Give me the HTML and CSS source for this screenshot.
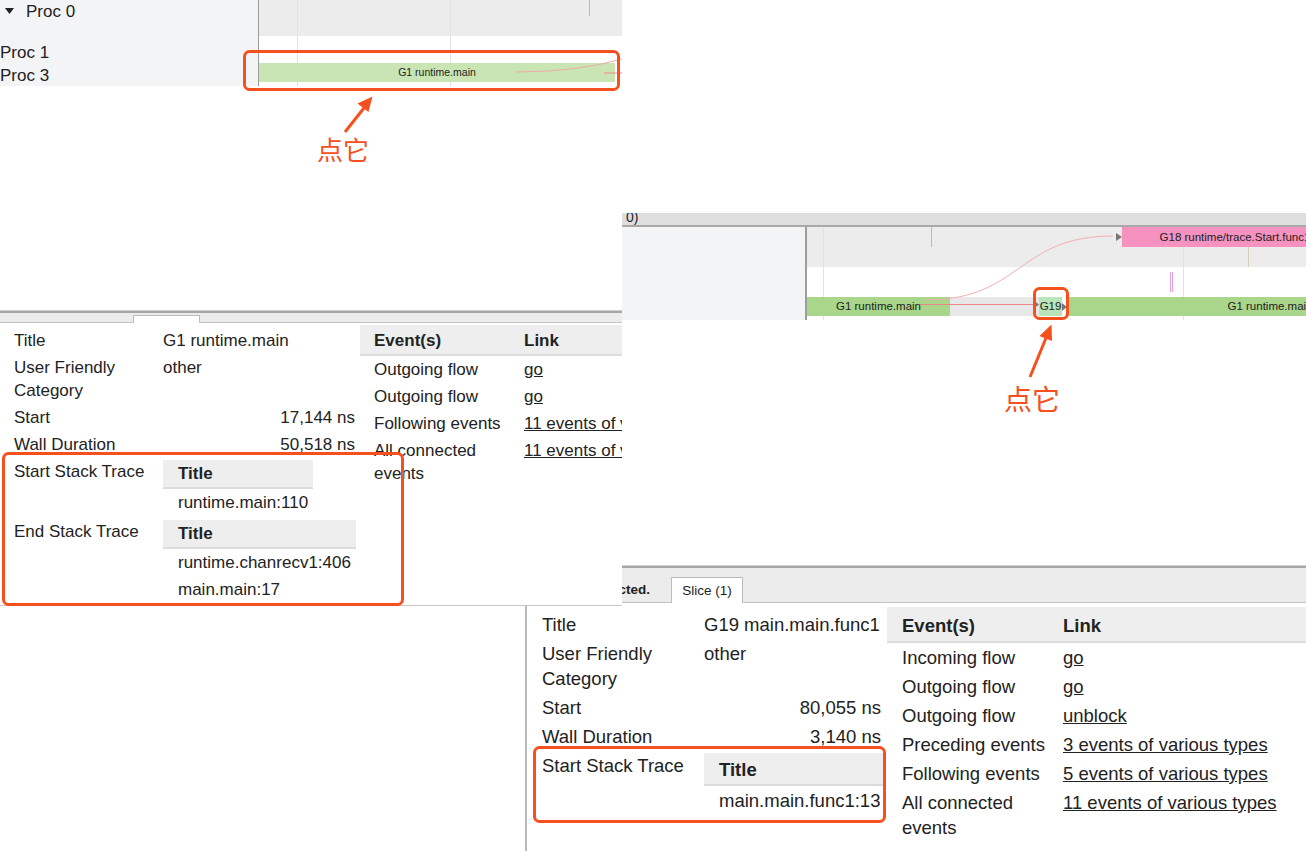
FILE: index.html
```html
<!DOCTYPE html>
<html>
<head>
    <meta charset="utf-8">
    <link rel="stylesheet" href="styles.css">
</head>
<body>
<div class="canvas">

    <!-- second capture: the G19 slice is selected -->
    <div class="shot shot-b">
        <div class="trace">
            <div class="trace-header"><span class="proc-name">0)</span></div>
            <div class="lanes">
                <div class="lane lane-top">
                    <div class="lane-label"></div>
                    <div class="lane-track shaded">
                        <span class="grid" style="left:16px"></span>
                        <span class="grid" style="left:376px"></span>
                        <span class="tick pink" style="left:124px;top:0;height:20px"></span>
                        <span class="arrow-head" style="left:309px;top:6px"></span>
                        <div class="slice slice-pink" style="left:315px;top:0;width:226px;height:20px;line-height:20px">G18 runtime/trace.Start.func1</div>
                        <span class="tick tan" style="left:441px;top:20px;height:20px"></span>
                    </div>
                </div>
                <div class="lane lane-bottom">
                    <div class="lane-label"></div>
                    <div class="lane-track">
                        <span class="grid" style="left:16px"></span>
                        <span class="grid" style="left:376px"></span>
                        <span class="tick pink" style="left:363px;top:5px;height:20px"></span>
                        <span class="tick pink" style="left:365px;top:5px;height:20px"></span>
                        <div class="slice slice-green" style="left:0;top:30px;width:143px">G1 runtime.main</div>
                        <div class="slice slice-idle" style="left:143px;top:30px;width:89px"></div>
                        <div class="slice slice-sel" style="left:232px;top:30px;width:23px">G19</div>
                        <span class="arrow-head small" style="left:255px;top:36px"></span>
                        <div class="slice slice-green" style="left:261px;top:30px;width:404px">G1 runtime.main</div>
                    </div>
                </div>
                <svg class="flows" width="499" height="93">
                    <path d="M118,73 C215,73 210,9 306,9" fill="none" stroke="#f2b0b0" stroke-width="1"/>
                    <path d="M113,77.5 H229" fill="none" stroke="#ec8686" stroke-width="1"/>
                    <polygon points="228,74.5 232,77.5 228,80.5" fill="#777"/>
                </svg>
            </div>
        </div>

        <div class="tabs">
            <div class="tabs-bar">
                <span class="tab-status">1 item selected.</span>
                <span class="tab">Slice (1)</span>
            </div>
        </div>

        <div class="details">
            <div class="info">
                <div class="k">Title</div><div class="v">G19 main.main.func1</div>
                <div class="k">User Friendly Category</div><div class="v">other</div>
                <div class="k">Start</div><div class="v num">80,055 ns</div>
                <div class="k">Wall Duration</div><div class="v num">3,140 ns</div>
                <div class="k">Start Stack Trace</div>
                <div class="v">
                    <table class="stack">
                        <tr><th>Title</th></tr>
                        <tr><td>main.main.func1:13</td></tr>
                    </table>
                </div>
            </div>
            <div class="events">
                <div class="h">Event(s)</div><div class="h">Link</div>
                <div class="e">Incoming flow</div><div class="l"><a href="#">go</a></div>
                <div class="e">Outgoing flow</div><div class="l"><a href="#">go</a></div>
                <div class="e">Outgoing flow</div><div class="l"><a href="#">unblock</a></div>
                <div class="e">Preceding events</div><div class="l"><a href="#">3 events of various types</a></div>
                <div class="e">Following events</div><div class="l"><a href="#">5 events of various types</a></div>
                <div class="e">All connected events</div><div class="l"><a href="#">11 events of various types</a></div>
            </div>
        </div>
    </div>

    <!-- first capture: G1 runtime.main on Proc 3 -->
    <div class="shot shot-a">
        <div class="trace">
            <div class="lanes">
                <div class="lane lane-proc0">
                    <div class="lane-label">
                        <svg class="caret" width="9" height="6" viewBox="0 0 9 6"><polygon points="0,0 9,0 4.5,6" fill="#222"/></svg>
                        <span>Proc 0</span>
                    </div>
                    <div class="lane-track shaded">
                        <span class="grid" style="left:38px"></span>
                        <span class="grid" style="left:191px"></span>
                        <span class="tick pink" style="left:330px;top:0;height:16px"></span>
                    </div>
                </div>
                <div class="lane lane-procs">
                    <div class="lane-label">
                        <div>Proc 1</div>
                        <div>Proc 3</div>
                    </div>
                    <div class="lane-track">
                        <span class="grid" style="left:38px"></span>
                        <span class="grid" style="left:191px"></span>
                        <div class="slice slice-light" style="left:0;top:27px;width:356px">G1 runtime.main</div>
                    </div>
                </div>
                <svg class="flows" width="363" height="86">
                    <path d="M257,72 Q318,72 363,59" fill="none" stroke="#f0aaaa" stroke-width="1"/>
                    <path d="M345,73 H363" fill="none" stroke="#ec8a8a" stroke-width="1"/>
                </svg>
            </div>
        </div>

        <div class="tabs">
            <div class="tabs-bar">
                <span class="tab"></span>
            </div>
        </div>

        <div class="details">
            <div class="info">
                <div class="k">Title</div><div class="v">G1 runtime.main</div>
                <div class="k">User Friendly Category</div><div class="v">other</div>
                <div class="k">Start</div><div class="v num">17,144 ns</div>
                <div class="k">Wall Duration</div><div class="v num">50,518 ns</div>
                <div class="k">Start Stack Trace</div>
                <div class="v">
                    <table class="stack">
                        <tr><th>Title</th></tr>
                        <tr><td>runtime.main:110</td></tr>
                    </table>
                </div>
                <div class="k">End Stack Trace</div>
                <div class="v">
                    <table class="stack">
                        <tr><th>Title</th></tr>
                        <tr><td>runtime.chanrecv1:406</td></tr>
                        <tr><td>main.main:17</td></tr>
                    </table>
                </div>
            </div>
            <div class="events">
                <div class="h">Event(s)</div><div class="h">Link</div>
                <div class="e">Outgoing flow</div><div class="l"><a href="#">go</a></div>
                <div class="e">Outgoing flow</div><div class="l"><a href="#">go</a></div>
                <div class="e">Following events</div><div class="l"><a href="#">11 events of various types</a></div>
                <div class="e">All connected events</div><div class="l"><a href="#">11 events of various types</a></div>
            </div>
        </div>
    </div>

    <!-- annotations drawn over both captures -->
    <svg class="marks" width="1306" height="851">
        <g fill="none" stroke="#f5501d" stroke-width="3">
            <rect x="244.5" y="51.5" width="374" height="38" rx="5"/>
            <rect x="3.5" y="453.5" width="399" height="151" rx="5"/>
            <rect x="1034.5" y="288.5" width="33" height="30" rx="5"/>
            <rect x="534.5" y="747.5" width="350" height="74" rx="5"/>
            <path d="M345,132 L364,108"/>
            <path d="M1030,377 L1046,338"/>
        </g>
        <g fill="#f5501d">
            <polygon points="372.5,96.5 368.5,112 357.5,103.5"/>
            <polygon points="1051.5,324.5 1052,341 1039.5,336"/>
        </g>
    </svg>
    <div class="note note-a">点它</div>
    <div class="note note-b">点它</div>

</div>
</body>
</html>
```

FILE: styles.css
```css
* {
    box-sizing: border-box;
}
body {
    margin: 0;
    background: #fff;
    font-family: "Liberation Sans", Arial, "Noto Sans CJK SC", sans-serif;
    color: #222;
}
.canvas {
    position: relative;
    width: 1306px;
    height: 851px;
    overflow: hidden;
    background: #fff;
}

/* each capture is a cropped window pasted on the canvas */
.shot {
    position: absolute;
    background: #fff;
    overflow: hidden;
    display: flex;
    flex-direction: column;
}
.shot-a {
    left: 0;
    top: 0;
    width: 622px;
    height: 606px;
    font-size: 17px;
    line-height: 23px;
    border-bottom: 1px solid #c8c8c8;
}
.shot-b {
    left: 525px;
    top: 213px;
    width: 781px;
    height: 638px;
    font-size: 18.5px;
    line-height: 25px;
}

/* timeline */
.trace-header {
    height: 14px;
    background: #dedede;
    border-bottom: 2px solid #a9a9a9;
    padding-left: 101px;
    font-size: 14px;
    line-height: 9px;
    overflow: hidden;
}
.lanes {
    position: relative;
}
.lane {
    display: flex;
}
.lane-label {
    flex: none;
    background: #f3f4f6;
}
.lane-track {
    position: relative;
    flex: 1;
    background: #fff;
}
.lane-track.shaded {
    background: #ececec;
}
.shot-a .lane-label {
    width: 259px;
    border-right: 1px solid #9c9c9c;
}
.shot-b .lane-label {
    width: 282px;
    border-right: 2px solid #9e9e9e;
}
.lane-top {
    height: 40px;
}
.lane-bottom {
    height: 53px;
}
.lane-proc0 {
    height: 36px;
}
.lane-proc0 .lane-label {
    display: flex;
    align-items: flex-start;
    padding-left: 5px;
}
.caret {
    margin: 8px 12px 0 0;
}
.lane-procs {
    height: 50px;
}
.lane-procs .lane-label {
    padding-top: 5px;
}
.flows {
    position: absolute;
    top: 0;
}
.shot-a .flows {
    left: 259px;
}
.shot-b .flows {
    left: 282px;
}

.grid {
    position: absolute;
    top: 0;
    bottom: 0;
    width: 1px;
    background: #e2e2e2;
}
.tick {
    position: absolute;
    width: 1px;
}
.tick.pink {
    background: #e49ce2;
}
.tick.tan {
    background: #d8cfb4;
}
.arrow-head {
    position: absolute;
    width: 0;
    height: 0;
    border-top: 4px solid transparent;
    border-bottom: 4px solid transparent;
    border-left: 6px solid #777;
}
.arrow-head.small {
    border-left-width: 5px;
}
.slice {
    position: absolute;
    height: 19px;
    line-height: 19px;
    font-size: 11.5px;
    text-align: center;
    white-space: nowrap;
    overflow: hidden;
    color: #222;
}
.slice-green {
    background: #a9d68b;
}
.slice-light {
    background: #c8e5b3;
    font-size: 10.5px;
}
.slice-idle {
    background: #e8e8e8;
}
.slice-sel {
    background: #b7e5b7;
}
.slice-pink {
    background: #f692c0;
}

/* tab strip under the timeline */
.tabs {
    border-top: 1px solid #d0d0d0;
}
.tabs-bar {
    display: flex;
    align-items: flex-end;
    background: #ececec;
    border-top: 2px solid #a6a6a6;
    border-bottom: 1px solid #c4c4c4;
}
.tab {
    background: #fff;
    border: 1px solid #bcbcbc;
    border-bottom: none;
    margin-bottom: -1px;
}
.shot-a .tabs {
    margin-top: 224px;
}
.shot-a .tabs-bar {
    height: 12px;
}
.shot-a .tab {
    margin-left: 133px;
    width: 67px;
    height: 8px;
}
.shot-b .tabs {
    margin-top: 245px;
}
.shot-b .tabs-bar {
    height: 37px;
}
.tab-status {
    width: 125px;
    margin-right: 21px;
    text-align: right;
    font-size: 13.5px;
    font-weight: bold;
    line-height: 26px;
    margin-bottom: -1px;
}
.shot-b .tab {
    width: 72px;
    height: 26px;
    font-size: 13.5px;
    line-height: 25px;
    text-align: center;
}

/* selection details */
.details {
    display: flex;
    flex: 1;
}
.shot-a .details {
    padding-top: 4px;
    gap: 5px;
}
.shot-b .details {
    border-left: 2px solid #b9b9b9;
    padding-top: 7px;
    gap: 6px;
}
.info {
    flex: none;
    display: grid;
    align-content: start;
}
.shot-a .info {
    grid-template-columns: 163px 192px;
}
.shot-b .info {
    grid-template-columns: 177px 177px;
}
.info .k {
    padding: 2px 4px 2px 14px;
}
.shot-b .info .k {
    padding-left: 15px;
}
.info .v {
    padding: 2px 0;
}
.info .num {
    text-align: right;
}
.stack {
    border-collapse: collapse;
}
.stack th {
    background: #eee;
    border-bottom: 2px solid #dcdcdc;
    text-align: left;
    font-weight: bold;
    padding: 2px 5px 2px 15px;
}
.shot-b .stack th {
    padding: 4px 5px 2px 15px;
}
.stack td {
    padding: 2px 5px 2px 15px;
}

.events {
    flex: 1;
    display: grid;
    align-content: start;
}
.shot-a .events {
    grid-template-columns: 150px 1fr;
    margin-top: -2px;
}
.shot-b .events {
    grid-template-columns: 161px 1fr;
    margin-top: -3px;
}
.events .h {
    background: #eee;
    border-bottom: 2px solid #dcdcdc;
    font-weight: bold;
    padding: 4px 0 2px 14px;
}
.shot-b .events .h {
    padding: 6px 0 3px 15px;
}
.events .e {
    padding: 2px 0 2px 14px;
}
.events .l {
    padding: 2px 0 2px 15px;
    white-space: nowrap;
}
.shot-a .events .l {
    padding-left: 14px;
}
.shot-b .events .e {
    padding-left: 15px;
}
.events a {
    color: #222;
    text-decoration: underline;
}

/* red call-outs */
.marks {
    position: absolute;
    left: 0;
    top: 0;
}
.note {
    position: absolute;
    color: #f5501d;
    font-family: "Noto Sans CJK SC", sans-serif;
    line-height: 1;
    white-space: nowrap;
}
.note-a {
    left: 317px;
    top: 136px;
    font-size: 26px;
}
.note-b {
    left: 1004px;
    top: 384px;
    font-size: 28px;
}
```
